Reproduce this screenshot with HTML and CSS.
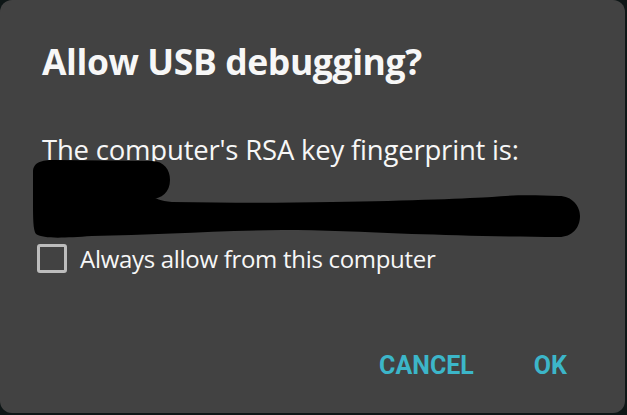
FILE: index.html
```html
<!DOCTYPE html>
<html lang="en">

<head>
    <meta charset="UTF-8">
    <meta name="viewport" content="width=device-width, initial-scale=1.0">
    <title>Allow USB debugging?</title>
    <link rel="stylesheet" href="styles.css">
</head>

<body>

    <div class="dialog">
        <h1 class="title">Allow USB debugging?</h1>

        <p class="message">The computer's RSA key fingerprint is:</p>

        <!-- redacted fingerprint -->
        <svg class="scribble" width="560" height="82" viewBox="0 0 560 82">
            <path d="M1 14 C1 4 10 2 22 2 L120 3 C132 3 138 12 138 22 C138 34 130 41 118 41 L1 41 Z" fill="#000" />
            <path d="M1 40 C1 36 4 36 10 37 L118 38 C124 40 128 43 140 44 C200 45 250 45 300 44 C380 43 440 40 460 39 C480 37 500 37 527 38 C540 38 548 48 548 58 C548 70 540 79 527 79 C470 79 420 77 380 76 C330 74 290 72 250 72 C180 73 120 77 60 78 C30 80 12 81 4 76 C1 72 1 60 1 40 Z" fill="#000" />
        </svg>

        <label class="check-row">
            <span class="checkbox"></span>
            <span class="check-label">Always allow from this computer</span>
        </label>

        <div class="actions">
            <button class="btn">CANCEL</button>
            <button class="btn">OK</button>
        </div>
    </div>

</body>

</html>
```

FILE: styles.css
```css
html {
    background-color: #0e1616;
}

body {
    margin: 0;
    width: 627px;
    height: 415px;
    font-family: "Open Sans", "Liberation Sans", sans-serif;
}

.dialog {
    box-sizing: border-box;
    width: 625px;
    height: 413px;
    background-color: #424242;
    border-radius: 12px;
    padding: 37px 0 0 42px;
    color: #f7f7f7;
}

.title {
    margin: 0;
    font-size: 35.5px;
    font-weight: 700;
    line-height: 48px;
    letter-spacing: -0.4px;
}

.message {
    margin: 48px 0 0 0;
    font-size: 27.5px;
    line-height: 34px;
    letter-spacing: -0.2px;
}

.scribble {
    display: block;
    margin: -9px 0 0 -10px;
}

.check-row {
    display: flex;
    align-items: center;
    gap: 13px;
    margin: 2px 0 0 -5px;
}

.checkbox {
    box-sizing: border-box;
    width: 30px;
    height: 29px;
    border: 3px solid #bdbdbd;
    border-radius: 3px;
}

.check-label {
    font-size: 24px;
    letter-spacing: -0.3px;
}

.actions {
    display: flex;
    justify-content: flex-end;
    gap: 60px;
    margin: 76px 58px 0 0;
}

.btn {
    padding: 0;
    border: none;
    background: none;
    font-family: Roboto, "Liberation Sans", sans-serif;
    font-weight: 700;
    font-size: 25px;
    color: #3cb6c9;
}
```
